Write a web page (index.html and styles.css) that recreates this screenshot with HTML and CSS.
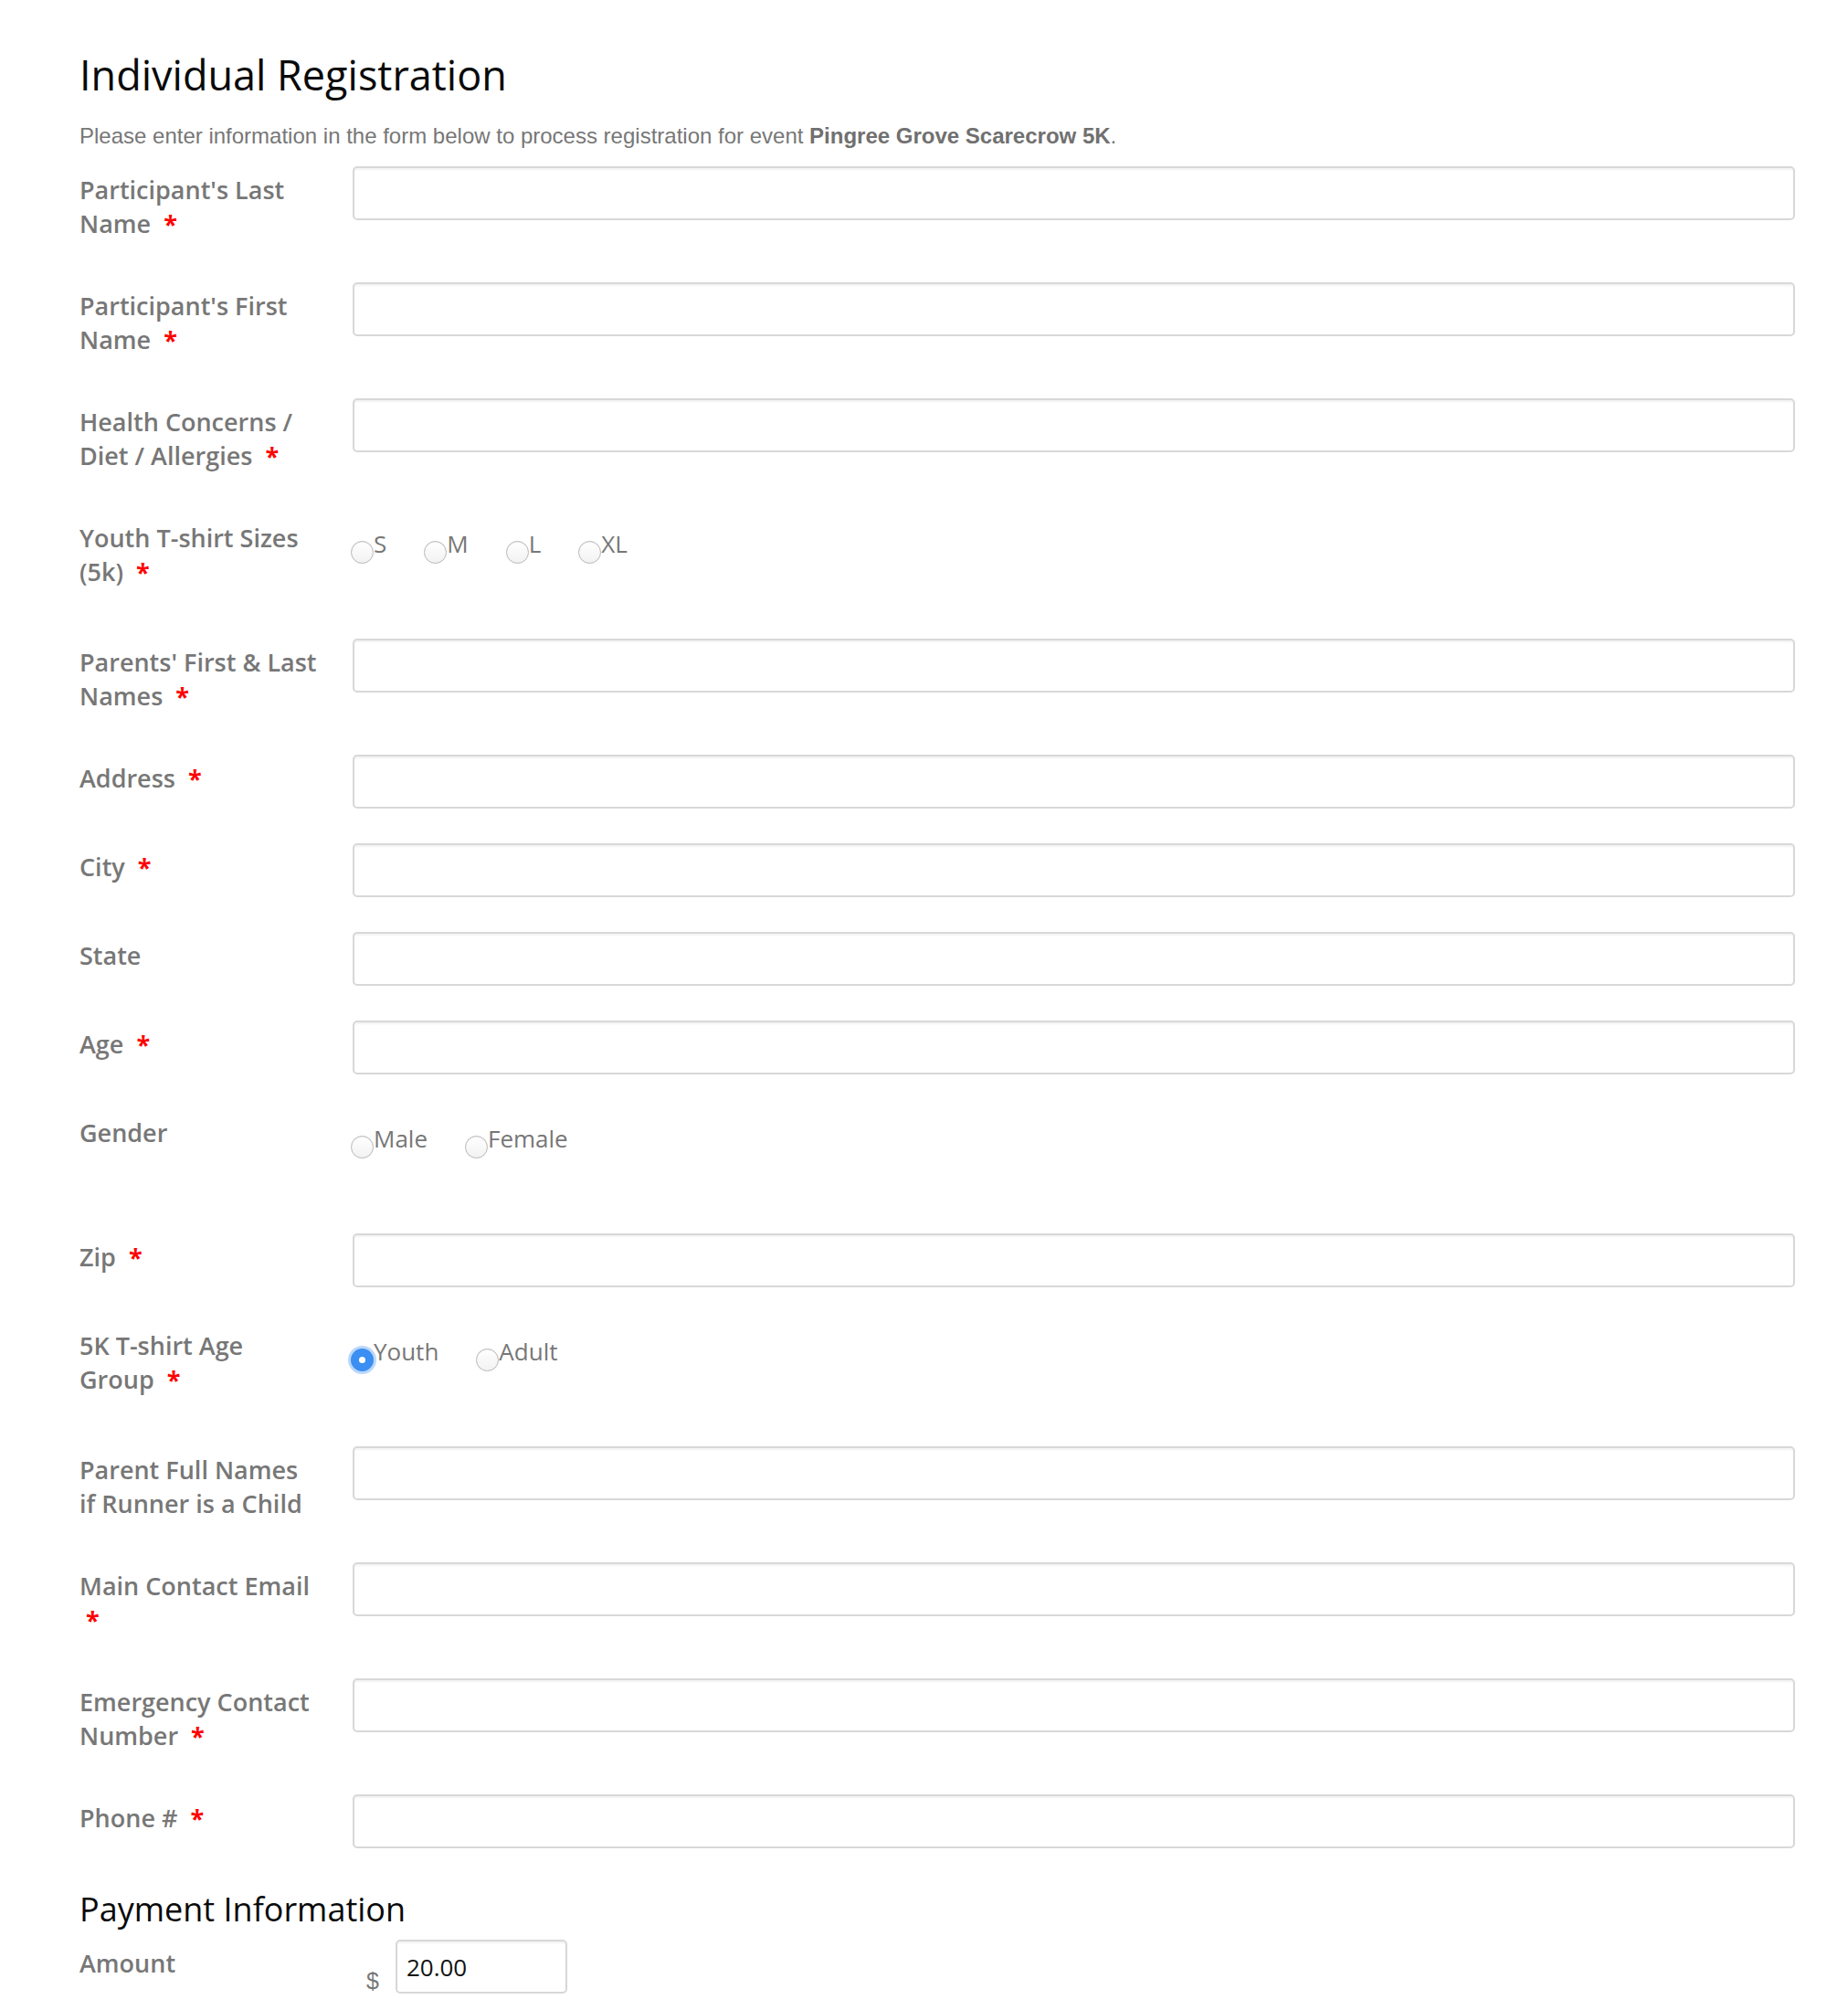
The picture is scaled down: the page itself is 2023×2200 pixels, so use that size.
FILE: index.html
```html
<!DOCTYPE html>
<html lang="en">
<head>
<meta charset="utf-8">
<title>Individual Registration</title>
<link rel="stylesheet" href="styles.css">
</head>
<body>
<div class="page">
  <h1 class="title">Individual Registration</h1>
  <p class="intro">Please enter information in the form below to process registration for event <b>Pingree Grove Scarecrow 5K</b>.</p>

  <form class="form">
    <div class="row">
      <label class="lbl">Participant's Last Name <span class="req">&nbsp;*</span></label>
      <div class="ctl"><input class="field" type="text"></div>
    </div>
    <div class="row">
      <label class="lbl">Participant's First Name <span class="req">&nbsp;*</span></label>
      <div class="ctl"><input class="field" type="text"></div>
    </div>
    <div class="row">
      <label class="lbl">Health Concerns / Diet / Allergies <span class="req">&nbsp;*</span></label>
      <div class="ctl"><input class="field" type="text"></div>
    </div>
    <div class="row">
      <label class="lbl">Youth T-shirt Sizes (5k) <span class="req">&nbsp;*</span></label>
      <div class="ctl radios">
        <label class="opt"><span class="radio"></span>S</label>
        <label class="opt"><span class="radio"></span>M</label>
        <label class="opt"><span class="radio"></span>L</label>
        <label class="opt"><span class="radio"></span>XL</label>
      </div>
    </div>
    <div class="row">
      <label class="lbl">Parents' First &amp; Last Names <span class="req">&nbsp;*</span></label>
      <div class="ctl"><input class="field" type="text"></div>
    </div>
    <div class="row">
      <label class="lbl">Address <span class="req">&nbsp;*</span></label>
      <div class="ctl"><input class="field" type="text"></div>
    </div>
    <div class="row">
      <label class="lbl">City <span class="req">&nbsp;*</span></label>
      <div class="ctl"><input class="field" type="text"></div>
    </div>
    <div class="row">
      <label class="lbl">State</label>
      <div class="ctl"><input class="field" type="text"></div>
    </div>
    <div class="row">
      <label class="lbl">Age <span class="req">&nbsp;*</span></label>
      <div class="ctl"><input class="field" type="text"></div>
    </div>
    <div class="row">
      <label class="lbl">Gender</label>
      <div class="ctl radios">
        <label class="opt"><span class="radio"></span>Male</label>
        <label class="opt"><span class="radio"></span>Female</label>
      </div>
    </div>
    <div class="row">
      <label class="lbl">Zip <span class="req">&nbsp;*</span></label>
      <div class="ctl"><input class="field" type="text"></div>
    </div>
    <div class="row">
      <label class="lbl">5K T-shirt Age Group <span class="req">&nbsp;*</span></label>
      <div class="ctl radios">
        <label class="opt"><span class="radio checked"></span>Youth</label>
        <label class="opt"><span class="radio"></span>Adult</label>
      </div>
    </div>
    <div class="row">
      <label class="lbl">Parent Full Names if Runner is a Child</label>
      <div class="ctl"><input class="field" type="text"></div>
    </div>
    <div class="row">
      <label class="lbl">Main Contact Email <span class="req">&nbsp;*</span></label>
      <div class="ctl"><input class="field" type="text"></div>
    </div>
    <div class="row">
      <label class="lbl">Emergency Contact Number <span class="req">&nbsp;*</span></label>
      <div class="ctl"><input class="field" type="text"></div>
    </div>
    <div class="row">
      <label class="lbl">Phone # <span class="req">&nbsp;*</span></label>
      <div class="ctl"><input class="field" type="text"></div>
    </div>

    <h2 class="sub">Payment Information</h2>
    <div class="row row-amount">
      <label class="lbl">Amount</label>
      <div class="ctl amount">
        <span class="currency">$</span>
        <input class="field field-amount" type="text" value="20.00">
      </div>
    </div>
  </form>
</div>
</body>
</html>
```
FILE: styles.css
```css
html, body {
  margin: 0;
  padding: 0;
  background: #ffffff;
}

.page {
  width: 1878px;
  padding: 52px 0 0 87px;
  font-family: "Open Sans", "Liberation Sans", sans-serif;
}

.title {
  margin: 0;
  font-size: 45px;
  line-height: 60px;
  font-weight: 500;
  color: #0a0a0a;
}

.intro {
  margin: 21px 0 17px;
  font-family: "Liberation Sans", Arial, sans-serif;
  font-size: 24px;
  line-height: 32px;
  color: #777777;
}

.intro b {
  color: #707070;
}

.form {
  margin: 0;
}

.row {
  display: grid;
  grid-template-columns: 299px 1fr;
  align-items: start;
  margin-bottom: 38px;
}

.lbl {
  padding: 7px 38px 8px 0;
  font-size: 27px;
  line-height: 37px;
  font-weight: 620;
  color: #777777;
}

.req {
  color: #ff0000;
  font-weight: 700;
}

.field {
  display: block;
  box-sizing: border-box;
  width: 100%;
  height: 59px;
  margin: 0;
  padding: 0 10px;
  border: 2px solid #d8d8d8;
  border-radius: 5px;
  background: #ffffff;
  box-shadow: inset 0 2px 2px rgba(0, 0, 0, 0.05);
  font-family: "Open Sans", sans-serif;
  font-size: 26px;
  color: #111111;
  outline: none;
}

.radios {
  display: flex;
  align-items: flex-start;
  height: 98px;
  box-sizing: border-box;
  padding-top: 14px;
}

.opt {
  display: inline-flex;
  align-items: flex-start;
  margin-right: 43px;
  font-size: 26px;
  line-height: 37px;
  color: #777777;
}

.radio {
  flex: none;
  box-sizing: border-box;
  width: 25px;
  height: 25px;
  margin: 15px 0 0 -2px;
  border: 1.5px solid #b8b8b8;
  border-radius: 50%;
  background: linear-gradient(#ffffff, #f2f2f2);
  box-shadow: inset 0 1px 1px rgba(0, 0, 0, 0.06);
}

.radio.checked {
  display: flex;
  align-items: center;
  justify-content: center;
  border: none;
  background: #3b8ef2;
  box-shadow: 0 0 0 3px rgba(59, 142, 242, 0.35);
}

.radio.checked::after {
  content: "";
  width: 7px;
  height: 7px;
  border-radius: 50%;
  background: #ffffff;
}

.sub {
  margin: 45px 0 11px;
  font-size: 36px;
  line-height: 44px;
  font-weight: 400;
  color: #0a0a0a;
}

.amount {
  display: flex;
  align-items: flex-end;
  padding-left: 15px;
}

.currency {
  font-family: "Liberation Sans", Arial, sans-serif;
  font-size: 25px;
  line-height: 25px;
  color: #777777;
  margin-bottom: 1px;
}

.field-amount {
  width: 188px;
  margin-left: 18px;
}
```
